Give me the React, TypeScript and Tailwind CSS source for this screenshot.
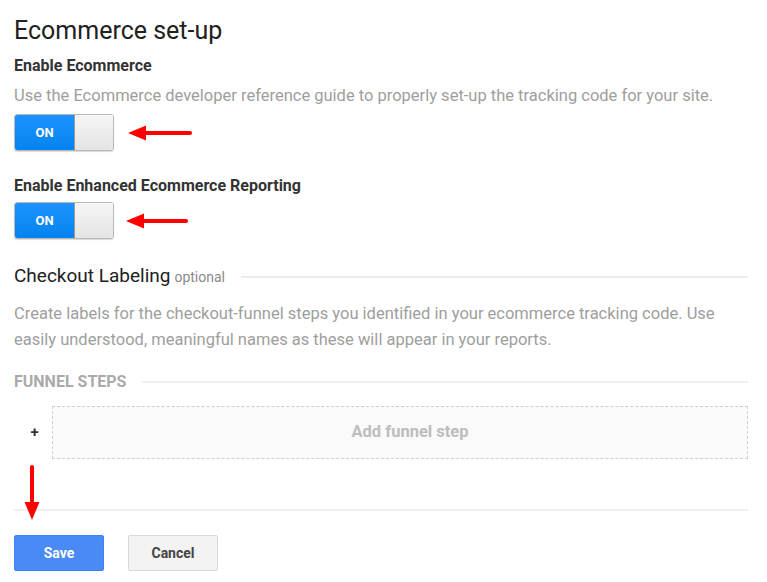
import React from 'react'

function LeftArrow({ width }: { width: number }) {
  return (
    <svg width={width} height="16" viewBox={`0 0 ${width} 16`} className="block">
      <polygon points="0,8 18,0.5 18,15.5" fill="#f00" />
      <line x1="16" y1="8" x2={width - 2} y2="8" stroke="#f00" strokeWidth="4" strokeLinecap="round" />
    </svg>
  )
}

function Toggle() {
  return (
    <div className="flex h-[37px] w-[100px] overflow-hidden rounded-[3px] border border-[#b8b8b8] shadow-[0_1px_1px_rgba(0,0,0,0.15)]">
      <div className="flex w-[60px] items-center justify-center border-r border-[#9a9a9a] bg-gradient-to-b from-[#1a93ff] to-[#0583ee] text-[13px] font-bold text-white">
        ON
      </div>
      <div className="flex-1 bg-gradient-to-b from-[#f6f6f6] to-[#e4e4e4]" />
    </div>
  )
}

export default function App() {
  return (
    <main className="relative min-h-[582px] bg-white pl-[14px] pr-[19px] pt-4 font-['Roboto',sans-serif] text-[16px] text-[#222]">
      <h1 className="text-[25px] leading-[30px] text-[#212121]">Ecommerce set-up</h1>

      <h2 className="mt-[10px] text-[16px] font-bold leading-[20px] text-[#333]">Enable Ecommerce</h2>
      <p className="mt-[10px] text-[16.5px] leading-[20px] text-[#9e9e9e]">
        Use the Ecommerce developer reference guide to properly set-up the tracking code for your site.
      </p>
      <div className="mt-[8px] flex items-center gap-[14px]">
        <Toggle />
        <LeftArrow width={64} />
      </div>

      <h2 className="mt-[25px] text-[16px] font-bold leading-[20px] text-[#333]">
        Enable Enhanced Ecommerce Reporting
      </h2>
      <div className="mt-[6px] flex items-center gap-[12px]">
        <Toggle />
        <LeftArrow width={62} />
      </div>

      <div className="mt-[25px] flex items-center gap-4">
        <div className="shrink-0 leading-[24px]">
          <span className="text-[19px] text-[#212121]">Checkout Labeling</span>{' '}
          <span className="text-[14px] text-[#8a8a8a]">optional</span>
        </div>
        <div className="h-[2px] flex-1 bg-[#ececec]" />
      </div>
      <p className="mt-[12px] text-[16.5px] leading-[26px] text-[#9e9e9e]">
        Create labels for the checkout-funnel steps you identified in your ecommerce tracking code. Use easily
        understood, meaningful names as these will appear in your reports.
      </p>

      <div className="mt-[19px] flex items-center gap-4">
        <span className="shrink-0 text-[16px] font-bold leading-[20px] text-[#aaa]">FUNNEL STEPS</span>
        <div className="h-[2px] flex-1 bg-[#efefef]" />
      </div>

      <div className="mt-[14px] flex items-center">
        <span className="w-[38px] pl-[3px] text-center text-[15px] font-bold text-[#333]">+</span>
        <div className="flex h-[53px] flex-1 items-center justify-center border border-dashed border-[#cfcfcf] bg-[#fafafa] pl-5 text-[16.5px] font-bold text-[#bdbdbd]">
          Add funnel step
        </div>
      </div>

      <div className="mt-[50px] h-[2px] bg-[#efefef]" />

      <div className="mt-[24px] flex gap-[24px]">
        <button className="h-[36px] w-[90px] rounded-[2px] border border-[#3b82f6] bg-[#4a8af4] text-[14px] font-bold text-white">
          Save
        </button>
        <button className="h-[36px] w-[90px] rounded-[2px] border border-[#d9d9d9] bg-[#f3f3f3] text-[14px] font-bold text-[#444]">
          Cancel
        </button>
      </div>

      <svg width="16" height="56" viewBox="0 0 16 56" className="absolute left-[24px] top-[465px]">
        <line x1="8" y1="2" x2="8" y2="40" stroke="#f00" strokeWidth="4" strokeLinecap="round" />
        <polygon points="0.5,37 15.5,37 8,55" fill="#f00" />
      </svg>
    </main>
  )
}
